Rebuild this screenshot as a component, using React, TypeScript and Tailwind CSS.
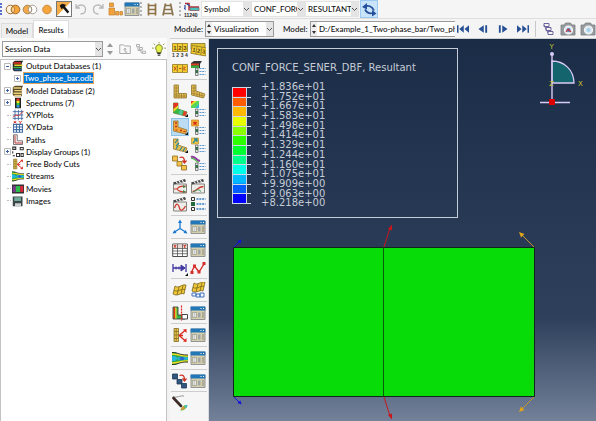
import React from "react";

type IconProps = { children: React.ReactNode; className?: string };

function Icon({ children, className = "h-4 w-4" }: IconProps) {
  return (
    <svg viewBox="0 0 16 16" className={`block shrink-0 ${className}`} fill="none" aria-hidden="true">
      {children}
    </svg>
  );
}

/* ---------- toolbox drawings ---------- */

const bentL = "M1.500 2h4.500v6l9 3-1.500 4-12-3z";
const straightL = "M2 2h4.500v8.500h8v4.500H2z";

function Numbers({ tilted = false }: { tilted?: boolean }) {
  return (
    <Icon>
      {tilted && <path d="M1 1.500h14v6H1z" fill="#e0c22c" stroke="#77661e" strokeWidth=".7" />}
      <g transform={tilted ? "rotate(10 8 8) translate(1 3)" : "translate(0 0)"}>
        <path d="M.5 1.500h15v8H.5z" fill="#f5cf2f" stroke="#8f7a28" strokeWidth=".8" />
        <path d="M5.500 1.500v8M10.500 1.500v8" stroke="#8f7a28" strokeWidth=".8" />
        <g fill="#59441a" fontFamily="Liberation Sans, sans-serif" fontSize="6" fontWeight="700">
          <text x="1.300" y="7.600">1</text>
          <text x="6.300" y="7.600">2</text>
          <text x="11.300" y="7.600">3</text>
        </g>
      </g>
      {!tilted && (
        <g fill="#333" fontFamily="Liberation Sans, sans-serif" fontSize="5" fontWeight="700">
          <text x="0" y="15">1</text>
          <text x="4.300" y="15">2</text>
          <text x="8.700" y="15">3</text>
          <text x="13" y="15">4</text>
        </g>
      )}
    </Icon>
  );
}

function CrossedStrip() {
  return (
    <Icon>
      <path d="M.5 4.500h15v8H.5z" fill="#f5cf2f" stroke="#8f7a28" strokeWidth=".8" />
      <path d="M5.500 4.500v8M10.500 4.500v8" stroke="#8f7a28" strokeWidth=".8" />
      <path d="M2 6.500l2.500 4M4.500 6.500l-2.500 4M7 8.500h2.500M12 6.500v4M14 6.500l-2 2 2 2" stroke="#c8541e" />
    </Icon>
  );
}

function OptionList({ kind }: { kind: "solid" | "contour" | "red" | "vector" | "curve" | "plain" }) {
  return (
    <Icon>
      {kind === "solid" && (
        <>
          <path d="M1 3l3-2h8l-2 3v4H1z" fill="#333" />
          <path d="M1 3.500h8v2H1z" fill="#e23a22" />
          <path d="M1 5.500h8v2.500H1z" fill="#38a838" />
        </>
      )}
      {kind === "contour" && (
        <>
          <path d="M1 0h8v7H1z" fill="#58d658" />
          <path d="M1 0h6L1 5z" fill="#f0e32e" />
          <path d="M1 0h3L1 3z" fill="#ef4423" />
          <path d="M9 3v4H5z" fill="#31b8e0" />
        </>
      )}
      {kind === "red" && (
        <>
          <path d="M1.500 1h7v6h-7z" fill="#f2ad36" stroke="#c98a1c" strokeWidth=".7" />
          <path d="M3.500 3l3 2.500M6.500 3l-3 2.500" stroke="#d32616" strokeWidth="1.500" />
        </>
      )}
      {kind === "vector" && (
        <>
          <path d="M1.500 1h7v6h-7z" fill="#f3c845" stroke="#b99429" strokeWidth=".7" />
          <path d="M3 6l3.500-4M4 2h3v3" stroke="#26889c" strokeWidth="1.300" />
        </>
      )}
      {kind === "curve" && (
        <>
          <path d="M1 2c4-2 4 3 9 4" stroke="#8c3b9c" strokeWidth="2" />
          <path d="M1 3.500c4-1 4 3 8 4" stroke="#52b848" strokeWidth="1.200" />
        </>
      )}
      {kind === "plain" ? (
        <>
          <path d="M1.500 1.500h3v3h-3zM1.500 11.500h3v3h-3z" stroke="#333" />
          <path d="M1 6h4v4H1z" fill="#246b3c" />
          <path d="M6.500 3h9M6.500 8h9M6.500 13h9" stroke="#397fc4" strokeWidth="1.400" strokeDasharray="2 .8" />
        </>
      ) : (
        <>
          <path d="M5.500 8h2.500v7.500H5.500z" fill="#e6e6e6" stroke="#666" strokeWidth=".8" />
          <path d="M5.500 10h2.500v3H5.500z" fill="#386f4b" />
          <path d="M9.500 8.500h6M9.500 11.500h6M9.500 14.500h6" stroke="#5c96ce" strokeWidth="1.100" strokeDasharray="2 .7" />
        </>
      )}
    </Icon>
  );
}

function MeshL({ bent = false, mode = "plain" }: { bent?: boolean; mode?: "plain" | "contour" | "symbol" | "material" }) {
  return (
    <Icon>
      <path
        d={bent ? bentL : straightL}
        fill={mode === "contour" ? "#35b943" : mode === "symbol" ? "#f3a53a" : "#e9c252"}
        stroke={mode === "contour" ? "#5d7d3c" : "#907632"}
        strokeWidth=".8"
      />
      {mode === "contour" && (
        <>
          <path d="M1.500 2h4.500v2.500L1.500 8z" fill="#ea3320" />
          <path d="M1.500 8L6 4.500V7L1.500 11z" fill="#f3d326" />
          <path d="M8 8.700l3 1-1.500 4.300-3-.8z" fill="#52c8a0" />
          <path d="M12 10l3 1-1.500 4-3-.8z" fill="#e4402a" />
        </>
      )}
      {mode === "plain" && !bent && (
        <path d="M2 5h4.500M2 8h4.500M2 11h4.500M2 13h12.500M4.200 2v13M7 10.500V15M9.500 10.500V15M12 10.500V15" stroke="#907632" strokeWidth=".7" />
      )}
      {mode === "plain" && bent && (
        <path d="M1.500 5H6M1.500 8H6M1.500 10l12.500 3M4 2v10.500M7 8.500v5M9.500 9v5M12 10v4.500" stroke="#907632" strokeWidth=".7" />
      )}
      {mode === "symbol" && (
        <path d="M3 4h2M4 3v2M3 7.500h2M4 6.500v2M3.500 11h2M8 11.500h2M9 10.500v2M11.500 12.500h2" stroke="#c13a18" strokeWidth="1.100" />
      )}
      {mode === "material" && (
        <path d="M3 6l3-4M4 9l3-3M4 12l2-3M8 13l2-3M11 14l2-3" stroke="#28869a" strokeWidth="1.200" />
      )}
      {mode !== "plain" && <path d="M16 13v3h-3z" fill="#111" />}
    </Icon>
  );
}

function Superimpose({ dark = false }: { dark?: boolean }) {
  const fill = dark ? "#31577f" : "#f5c24b";
  const stroke = dark ? "#203a58" : "#8f6c1c";
  return (
    <Icon>
      <path d="M.5 1h5v5h-5z" fill={fill} stroke={stroke} strokeWidth=".8" />
      <path d="M5 6.500h5v4.500H5zM9.500 10.500h5V15h-5z" fill={fill} stroke={stroke} strokeWidth=".8" />
      <path d="M7.500 2.500c4-1.500 5 1 5 4.500M10.500 5.500l2 2.500 2-2.500" stroke="#cf3322" strokeWidth="1.300" />
    </Icon>
  );
}

function Clapper({ kind }: { kind: "loop" | "peak" | "wave" }) {
  return (
    <Icon>
      <path d="M1.500 6h13v9h-13z" fill="#ecece8" stroke="#84867f" />
      <path d="M1 4.500l12-3.500 1 2.500L2 6.500z" fill="#444" />
      <path d="M4 3.500l1.500 2M7 2.800l1.500 2M10 2l1.500 2" stroke="#fff" strokeWidth="1.100" />
      {kind === "loop" && (
        <>
          <path d="M2 11h3c2-3 5-3 9-3M5 11c2 3 5 3 9 3" stroke="#cf3a30" strokeWidth="1.200" />
          <path d="M11 7v3l3-1zM11 12v3l3-1z" fill="#328546" />
        </>
      )}
      {kind === "peak" && (
        <>
          <path d="M2.500 13.500c4 0 5-5 11-5" stroke="#cf3a30" strokeWidth="1.300" />
          <path d="M3 13.500c4 0 4-4 8 0" stroke="#328546" />
        </>
      )}
      {kind === "wave" && <path d="M2.500 12c2-6 4-4 5 0s4 2 6-2" stroke="#cf3a30" strokeWidth="1.300" />}
    </Icon>
  );
}

function DialogIcon() {
  return (
    <Icon>
      <path d="M1 2h14v12.500H1z" fill="#d6cfad" stroke="#7d8185" strokeWidth=".8" />
      <path d="M.6 1.500h14.800v4H.6z" fill="#2477b7" />
      <path d="M10.500 3.500h1M13 3.500h1" stroke="#fff" />
      <path d="M2.500 7.500h4v5h-4z" fill="#fff" stroke="#858877" strokeWidth=".6" />
      <path d="M8 7.500h2.500v5H8z" fill="#9fa6a6" />
      <path d="M12 8h2M12 10h2M12 12h2M3.500 9h2M3.500 11h2" stroke="#777" strokeWidth=".8" />
    </Icon>
  );
}

function Axes() {
  return (
    <Icon>
      <path d="M8 2v7.500L2.500 13M8 9.500l5.500 3.500" stroke="#1878d2" strokeWidth="1.300" />
      <path d="M8 .5L6 4h4zM.5 14.500l2-3.500 2 3zM15.500 14.500l-4-.5 2-3z" fill="#1878d2" />
    </Icon>
  );
}

function DataTable() {
  return (
    <Icon>
      <path d="M.7 2h14.600v12.500H.7z" fill="#fff" stroke="#4d4d4d" />
      <path d="M1 2.500h14V6H1z" fill="#ead9d5" />
      <path d="M.7 6.500h14.600M.7 9h14.600M.7 11.700h14.600M5.500 2v12.500M10.500 2v12.500" stroke="#555" strokeWidth=".8" />
      <path d="M2 3l2 2.500M4 3L2 5.500M11.500 3l1.200 1.300L14 3M12.700 4v2" stroke="#c93a2b" strokeWidth="1.100" />
    </Icon>
  );
}

function DimensionArrow() {
  return (
    <Icon>
      <path d="M1 4v8M14 4v8M1 8h12" stroke="#4038a0" strokeWidth="1.300" />
      <path d="M9 5l4 3-4 3zM4 6.500v3M7 6.500v3" fill="#4038a0" stroke="#4038a0" />
      <path d="M16 13v3h-3z" fill="#111" />
    </Icon>
  );
}

function ZigZag() {
  return (
    <Icon>
      <path d="M1.500 12L4.500 6l4.500 6 5-8" stroke="#d62e2a" strokeWidth="1.400" />
      <path d="M.5 11h3v3h-3zM3 4.500h3v3H3zM7.500 10.500h3v3h-3zM12.500 2h3v3h-3z" fill="#d62e2a" />
    </Icon>
  );
}

function WavySheet({ linked = false }: { linked?: boolean }) {
  return (
    <Icon>
      <g transform={linked ? "translate(1 -3)" : undefined}>
        <path d="M3 4c4 3 6-2 11-1l-2 9c-3-2-6 3-11 0z" fill="#f0c837" stroke="#79641c" strokeWidth=".8" />
        <path d="M2 8.500c4 2 7-2 11-1M7 5l-2 8M11 3.500l-2 8.500" stroke="#79641c" strokeWidth=".8" />
      </g>
      {linked && <path d="M2 11h4v3H2zM6 12h4v3H6zM10 11h4v4h-4z" fill="#edf3ff" stroke="#4775bd" />}
    </Icon>
  );
}

function ViewCut() {
  return (
    <Icon>
      <path d="M1 2h5v8h7v4H1z" fill="#3ab64d" stroke="#333" strokeWidth=".8" />
      <path d="M1.500 2.500h1.700v11H1.500z" fill="#e5321e" />
      <path d="M3.200 2.500h1.300v11H3.200z" fill="#f1d522" />
      <path d="M10 9.500h5.500V14H10z" fill="#fff" stroke="#333" strokeWidth=".9" />
      <path d="M9.500.5V16" stroke="#e4231a" strokeWidth="1.200" strokeDasharray="2 1" />
    </Icon>
  );
}

function FreeBody({ className }: { className?: string }) {
  return (
    <Icon className={className}>
      <path d="M2 1.500h4.500v13H2z" fill="#edc64b" stroke="#826d27" strokeWidth=".8" />
      <path d="M2 4.500h4.500M2 8h4.500M2 11.500h4.500M4.200 1.500v13" stroke="#826d27" strokeWidth=".8" />
      <path d="M7 8.500l6-5M7 8.500h4M7 8.500l6 5" stroke="#dc2b22" strokeWidth="1.300" />
      <path d="M14.500 2v4l-3.500-3.500zM14.500 15v-4L11 14.500z" fill="#dc2b22" />
    </Icon>
  );
}

function Streams({ className }: { className?: string }) {
  return (
    <Icon className={className}>
      <path d="M0 2c6 0 5 2 9 3s4 0 7 0v7c-3 0-4-1-7 0s-3 3-9 3z" fill="#2da747" />
      <path d="M0 4c6 0 7 2 16 2M0 13c6 0 7-2 16-2" stroke="#f3e225" strokeWidth="1.500" />
      <path d="M0 6h3l3 2.500L3 11H0z" fill="#24b6dd" />
      <path d="M5 8.500C7 6 9 6.500 16 7.500v2C9 10.500 7 11 5 8.500z" fill="#24b6dd" />
      <ellipse cx="10" cy="8.500" rx="2.500" ry="1.500" fill="#2a61c8" />
      <path d="M0 2.500c7 0 6 2.500 16 2.500M0 14.500c7 0 6-2.500 16-2.500" stroke="#222" strokeWidth=".9" />
    </Icon>
  );
}

function Brush() {
  return (
    <Icon className="h-[18px] w-4">
      <path d="M1 2c4 1 8-2 11-1" stroke="#999" />
      <path d="M1.500 3l7.500 8" stroke="#3c2b27" strokeWidth="2.600" strokeLinecap="round" />
      <path d="M8.500 15.500c1-3.500 3-5.500 7-5.500-1 3.500-3 5.500-7 5.500z" fill="#60c34f" />
      <path d="M8.500 15.500c1-2.500 2-3.500 3-4.500l1.500 2.500z" fill="#e98d35" />
      <path d="M12.500 11l3-1-1 3z" fill="#40b5e4" />
    </Icon>
  );
}

type Tool = { label: string; icon: React.ReactNode; active?: boolean };
const options = (label: string): Tool => ({ label, icon: <DialogIcon /> });

const toolGroups: { tight?: boolean; tools: Tool[] }[] = [
  {
    tools: [
      { label: "Number frames", icon: <Numbers /> },
      { label: "Overlay frames", icon: <Numbers tilted /> },
      { label: "Link frames", icon: <CrossedStrip /> },
      { label: "Common options", icon: <OptionList kind="solid" /> },
    ],
  },
  {
    tools: [
      { label: "Plot undeformed shape", icon: <MeshL /> },
      { label: "Plot deformed shape", icon: <MeshL bent /> },
      { label: "Plot contours", icon: <MeshL bent mode="contour" /> },
      { label: "Contour options", icon: <OptionList kind="contour" /> },
      { label: "Plot symbols", icon: <MeshL bent mode="symbol" />, active: true },
      { label: "Symbol options", icon: <OptionList kind="red" /> },
      { label: "Plot material orientations", icon: <MeshL bent mode="material" /> },
      { label: "Material orientation options", icon: <OptionList kind="vector" /> },
      { label: "Allow multiple plot states", icon: <Superimpose /> },
      { label: "Superimpose options", icon: <OptionList kind="curve" /> },
    ],
  },
  {
    tools: [
      { label: "Animate scale factor", icon: <Clapper kind="loop" /> },
      { label: "Animate time history", icon: <Clapper kind="peak" /> },
      { label: "Animate harmonic", icon: <Clapper kind="wave" /> },
      { label: "Animation options", icon: <OptionList kind="plain" /> },
    ],
  },
  { tools: [{ label: "Create coordinate system", icon: <Axes /> }, options("Coordinate system manager")] },
  {
    tight: true,
    tools: [
      { label: "Create XY data", icon: <DataTable /> },
      options("XY data manager"),
      { label: "XY axis options", icon: <DimensionArrow /> },
      { label: "XY curve options", icon: <ZigZag /> },
    ],
  },
  {
    tools: [
      { label: "Create field output", icon: <WavySheet /> },
      { label: "Create field output from frames", icon: <WavySheet linked /> },
    ],
  },
  { tight: true, tools: [{ label: "Activate view cut", icon: <ViewCut /> }, options("View cut manager")] },
  { tools: [{ label: "Show free body", icon: <FreeBody /> }, options("Free body manager")] },
  { tools: [{ label: "Create stream", icon: <Streams /> }, options("Stream manager")] },
  { tight: true, tools: [{ label: "Create display group", icon: <Superimpose dark /> }, options("Display group manager")] },
  { tools: [{ label: "Color code", icon: <Brush /> }] },
];

function Toolbox() {
  return (
    <div role="toolbar" aria-label="Visualization tools" className="w-[39px] shrink-0 border-r border-[#dcdcdc] bg-[#f6f6f6] px-px">
      {toolGroups.map((group, i) => (
        <div
          key={i}
          className={`grid grid-cols-2 border-b border-[#cdcdcd] pt-0.5 last:border-0 ${group.tight ? "pb-px" : "pb-0.5"}`}
        >
          {group.tools.map((tool) => (
            <button
              key={tool.label}
              type="button"
              aria-label={tool.label}
              className={`flex h-[18px] items-center justify-center ${tool.active ? "bg-[#bcdcf4] outline outline-1 -outline-offset-1 outline-[#8cc1e8]" : ""}`}
            >
              {tool.icon}
            </button>
          ))}
        </div>
      ))}
    </div>
  );
}

/* ---------- shared controls ---------- */

type ComboProps = { label: string; value: string; width: string; spinner?: boolean; arrow?: boolean; framed?: boolean };

function Combo({ label, value, width, spinner = false, arrow = true, framed = false }: ComboProps) {
  return (
    <div className={`flex h-4 min-w-0 items-stretch border bg-white ${framed ? "border-[#9a9a9a]" : "border-[#e3e3e3]"} ${width}`}>
      {spinner && (
        <svg viewBox="0 0 6 14" className="h-[14px] w-1.5 shrink-0 bg-[#efefef]" aria-hidden="true">
          <path d="M1 5l2-3 2 3zM1 9l2 3 2-3z" fill="#333" />
        </svg>
      )}
      <select aria-label={label} defaultValue={value} className="min-w-0 flex-1 appearance-none bg-transparent pl-0.5 leading-[14px] outline-none">
        <option>{value}</option>
      </select>
      {arrow && (
        <svg viewBox="0 0 7 14" className="h-[14px] w-[7px] shrink-0 bg-[#e4e4e4]" fill="none" aria-hidden="true">
          <path d="M1 6l2.500 2.500L6 6" stroke="#555" />
        </svg>
      )}
    </div>
  );
}

function Grip() {
  return <span className="h-3.5 border-l-2 border-dotted border-[#b4b4b4]" />;
}

/* ---------- top toolbar ---------- */

const displayTools: Tool[] = [
  {
    label: "Replace selected",
    icon: (
      <Icon>
        <circle cx="5.500" cy="8.500" r="4.300" fill="#fff3df" stroke="#a06b2b" />
        <circle cx="10.500" cy="8.500" r="4.300" fill="#f5a53c" stroke="#a06b2b" />
        <path d="M8 5c2 2 2 5 0 7-2-2-2-5 0-7z" fill="#ffd293" stroke="#a06b2b" strokeWidth=".8" />
      </Icon>
    ),
  },
  {
    label: "Remove selected",
    icon: (
      <Icon>
        <circle cx="10.500" cy="8.500" r="4.300" fill="#fff" stroke="#aaa196" />
        <circle cx="5.500" cy="8.500" r="4.300" fill="#f3a94c" stroke="#a08658" />
        <path d="M8 5c2 2 2 5 0 7-2-2-2-5 0-7z" fill="#fff" stroke="#8d8378" strokeWidth=".8" />
      </Icon>
    ),
  },
  { label: "Replace all", icon: <Icon><circle cx="8" cy="8.500" r="4.300" fill="#f5a53c" stroke="#c98a3c" /></Icon> },
  {
    label: "Select entities",
    active: true,
    icon: (
      <Icon className="h-[14px] w-[14px]">
        <path d="M0 0h16L0 16z" fill="#f5ab48" />
        <path d="M16 0v16H0z" fill="#fff" />
        <path d="M3 4l3-2 4 1-1 2 5 6-2 2-5-6-2 1z" fill="#151515" />
      </Icon>
    ),
  },
  {
    label: "Undo",
    icon: <Icon><path d="M3 3v4h4M3.500 6.500c3-4 9-3 9 2 0 3-2 4.500-5 4.500" stroke="#b8b8b8" strokeWidth="1.300" /></Icon>,
  },
  {
    label: "Redo",
    icon: <Icon><path d="M13 3v4H9M12.500 6.500c-3-4-9-3-9 2 0 3 2 4.500 5 4.500" stroke="#b8b8b8" strokeWidth="1.300" /></Icon>,
  },
  {
    label: "Create display group",
    icon: (
      <Icon>
        <path d="M2.500 2h4v3.500h-4zM2 7h5.500v7H2z" fill="#f4a13b" stroke="#c48a3a" strokeWidth=".8" />
        <path d="M8.500 10.500H12V14H8.500zM13 10.500h2.500V14H13z" fill="#f4a13b" stroke="#c48a3a" strokeWidth=".8" />
      </Icon>
    ),
  },
  { label: "Display group manager", icon: <DialogIcon /> },
];

const ladder = (
  <Icon><path d="M4.500 2.500v12M11.500 2.500v12M4.500 4.500h7M4.500 8.500h7M4.500 12.500h7" stroke="#8f7346" strokeWidth="1.700" /></Icon>
);
const perspectiveLadder = (
  <Icon><path d="M5.500 2.500L3 14.500M10.500 2.500L13 14.500M5.500 4.500h5.500M4.500 8.500h7M3.500 12.500h9" stroke="#8a7450" strokeWidth="1.700" /></Icon>
);

function TopToolbar() {
  return (
    <div role="toolbar" aria-label="Display" className="flex h-[19px] items-center border-b border-[#dedede] bg-[#f5f5f5]">
      <span className="h-3 border-l-2 border-dotted border-[#5a70d0]" />
      <div className="ml-[3px] flex gap-px">
        {displayTools.map((t) => (
          <button
            key={t.label}
            type="button"
            aria-label={t.label}
            className={`flex h-4 w-4 items-center justify-center ${t.active ? "border border-[#777]" : ""}`}
          >
            {t.icon}
          </button>
        ))}
      </div>
      <div className="flex items-center">
        <Grip />
        <button type="button" aria-label="Parallel view" className="ml-0.5">{ladder}</button>
        <button type="button" aria-label="Perspective view">{perspectiveLadder}</button>
        <span className="ml-[3px] flex"><Grip /></span>
      </div>
      <Icon className="ml-[3px] mr-px h-4 w-4">
        <path d="M1 2.500h4v7M5 6h10" stroke="#b4343a" strokeWidth="1.500" />
        <path d="M6 6.500h9v3H6z" fill="#48c0ba" stroke="#8c4a50" strokeWidth=".7" />
        <path d="M1 4v4l-1-1M3 3l3 2" stroke="#2a4aa0" strokeWidth="1.200" />
        <g fill="#222" fontFamily="Liberation Sans, sans-serif" fontSize="5" fontWeight="700">
          <text x="0" y="15.500">11240</text>
        </g>
      </Icon>
      <div className="flex">
        <Combo label="Plot type" value="Symbol" width="w-[50px]" />
        <Combo label="Output variable" value="CONF_FORCE" width="w-[54px]" />
        <Combo label="Refinement" value="RESULTANT" width="w-[54px]" />
      </div>
      <button type="button" aria-label="Synchronize" className="ml-px border border-[#9dcaf0] bg-[#c9e3f8]">
        <Icon>
          <path d="M4 5.500c3-1.500 7-.5 9 4M12 12c-3 1-6 0-8-3.500" stroke="#244f9c" strokeWidth="1.800" />
          <path d="M1 6l5-4v6.500zM15.500 12.500L11 9v6.500z" fill="#244f9c" />
        </Icon>
      </button>
    </div>
  );
}

/* ---------- module bar ---------- */

const playback: Tool[] = [
  { label: "First frame", icon: <Icon className="h-3 w-3"><path d="M0 3h2v10H0zM9 3v10L3 8zM16 3v10L10 8z" fill="#264f94" /></Icon> },
  { label: "Previous frame", icon: <Icon className="h-3 w-3"><path d="M9 3v10L2 8zM11 3h2.500v10H11z" fill="#264f94" /></Icon> },
  { label: "Next frame", icon: <Icon className="h-3 w-3"><path d="M7 3v10l7-5zM2.500 3H5v10H2.500z" fill="#264f94" /></Icon> },
  { label: "Last frame", icon: <Icon className="h-3 w-3"><path d="M14 3h2v10h-2zM7 3v10l6-5zM0 3v10l6-5z" fill="#264f94" /></Icon> },
];

function Camera({ marked = false }: { marked?: boolean }) {
  return (
    <Icon>
      <path d="M1 4h3l1.500-2h5L12 4h3v10H1z" fill="#969b9f" stroke="#7c7f82" strokeWidth=".8" />
      <circle cx="8.500" cy="9" r="4" fill="#d9e9f5" stroke="#f4f4f4" strokeWidth="1.200" />
      <circle cx="8.500" cy="9" r="2" fill={marked ? "#4f78bd" : "#a8cfe8"} />
      {marked && <path d="M8 8l3 3M6 11l2-3" stroke="#c73838" strokeWidth="1.200" />}
    </Icon>
  );
}

function ModuleBar() {
  return (
    <div className="flex h-5 items-center overflow-hidden border-b border-[#d0d0d0] bg-[#f4f4f4]">
      <span className="w-[35px] shrink-0 pl-1">Module:</span>
      <Combo label="Module" value="Visualization" width="w-[69px] shrink-0" spinner framed />
      <span className="ml-[9px] w-[27px] shrink-0">Model:</span>
      <Combo label="Model" value="D:/Example_1_Two-phase_bar/Two_phase_bar.odb" width="flex-1 border-r-0" spinner arrow={false} framed />
      <div className="flex shrink-0 gap-2 pl-0.5">
        {playback.map((t) => (
          <button key={t.label} type="button" aria-label={t.label}>{t.icon}</button>
        ))}
      </div>
      <span className="ml-1.5 h-4 shrink-0 border-l border-[#c8c8c8]" />
      <div className="flex shrink-0 gap-1 pl-1">
        <button type="button" aria-label="Cascade viewports">
          <Icon><path d="M4 2.500h5v3H4zM6 6.500h5v3H6zM8 10.500h5v3H8zM4 4l4 8" stroke="#6b639c" /></Icon>
        </button>
        <button type="button" aria-label="Snapshot with view"><Camera marked /></button>
        <button type="button" aria-label="Snapshot"><Camera /></button>
      </div>
    </div>
  );
}

/* ---------- results tree ---------- */

const rainbowStack = (
  <Icon className="h-3 w-3">
    <path d="M1 3l3-2h11l-2 3v11H3L1 13z" fill="#222" />
    <path d="M2 4h10" stroke="#ee3422" strokeWidth="2" />
    <path d="M3 7h11" stroke="#f3cf29" strokeWidth="2" />
    <path d="M2 10h11" stroke="#43b64d" strokeWidth="2" />
    <path d="M3 13h10" stroke="#3070c8" strokeWidth="1.500" />
  </Icon>
);

const treeItems: { label: string; icon: React.ReactNode; expander?: string; child?: boolean }[] = [
  { label: "Output Databases (1)", icon: rainbowStack, expander: "−" },
  { label: "Two_phase_bar.odb", icon: null, expander: "+", child: true },
  {
    label: "Model Database (2)",
    expander: "+",
    icon: (
      <Icon className="h-3 w-3">
        <path d="M1 3l3-2h11l-2 3v11H3L1 13z" fill="#5a4b28" />
        <path d="M2 4h10M3 7.500h11M2 11h11M3 14h9" stroke="#ead17a" strokeWidth="1.800" />
      </Icon>
    ),
  },
  {
    label: "Spectrums (7)",
    expander: "+",
    icon: (
      <Icon className="h-3 w-3">
        <path d="M4 1h8v14H4z" fill="#222" />
        <path d="M6 2h4v3H6z" fill="#f0301c" />
        <path d="M6 5h4v3H6z" fill="#f4e21f" />
        <path d="M6 8h4v3H6z" fill="#39c649" />
        <path d="M6 11h4v3H6z" fill="#2aa1dc" />
      </Icon>
    ),
  },
  {
    label: "XYPlots",
    icon: (
      <Icon className="h-3 w-3">
        <path d="M1 3.500h14M1 8h14M1 12.500h14M4 1v14M8.500 1v14M13 1v14" stroke="#416da5" strokeWidth="1.200" />
        <path d="M1 11l4-3 4 1 6-6" stroke="#d62f2a" strokeWidth="1.200" />
      </Icon>
    ),
  },
  {
    label: "XYData",
    icon: (
      <Icon className="h-3 w-3">
        <path d="M2 4.500h12V15H2zM2 8h12M2 11.500h12M6 4.500V15M10 4.500V15" stroke="#416da5" strokeWidth="1.400" />
        <path d="M2 0l4 3M6 0L2 3M9 0l2 2 2-2M11 2v2" stroke="#dc322b" strokeWidth="1.300" />
      </Icon>
    ),
  },
  {
    label: "Paths",
    icon: (
      <Icon className="h-3 w-3">
        <path d="M2 1h5v8h7v5H2z" fill="#f6eeee" stroke="#5a5152" />
        <path d="M4 2v10h10" stroke="#bc3a3b" strokeWidth="1.300" />
      </Icon>
    ),
  },
  {
    label: "Display Groups (1)",
    expander: "+",
    icon: (
      <Icon className="h-3 w-3"><path d="M1 1.500h4v3H1zM11 2h4v3h-4zM6 10h4v4H6zM12 10h3v4h-3zM1 7v3M1 13h3" stroke="#333" strokeWidth="1.400" /></Icon>
    ),
  },
  { label: "Free Body Cuts", icon: <FreeBody className="h-3 w-3" /> },
  { label: "Streams", icon: <Streams className="h-3 w-3" /> },
  {
    label: "Movies",
    icon: (
      <Icon className="h-3 w-3">
        <path d="M0 2h16v12H0z" fill="#333" />
        <path d="M1 4h4v8H1z" fill="#7e3791" />
        <path d="M5 4h6v8H5z" fill="#2bbd4a" />
        <path d="M11 4h4v8h-4z" fill="#d72938" />
      </Icon>
    ),
  },
  {
    label: "Images",
    icon: (
      <Icon className="h-3 w-3">
        <path d="M1 2h13v13H1z" fill="#3b4548" />
        <path d="M3 3h9v5H3z" fill="#71a99b" />
        <path d="M4 11h8v4H4z" fill="#cbd2d0" />
      </Icon>
    ),
  },
];

function SidePanel() {
  return (
    <aside className="flex w-[167px] shrink-0 flex-col bg-[#f2f2f2]">
      <div role="tablist" className="flex h-[19px] items-end pl-px">
        <button role="tab" aria-selected="false" type="button" className="h-[15px] w-8 border border-b-0 border-[#dcdcdc] bg-[#eeeeee]">Model</button>
        <button role="tab" aria-selected="true" type="button" className="h-[18px] w-9 border border-b-0 border-[#dcdcdc] bg-white">Results</button>
      </div>
      <div className="flex flex-1 flex-col bg-[#fafafa] pt-0.5">
        <div className="flex h-[17px] items-center pl-0.5">
          <Combo label="Data source" value="Session Data" width="w-[101px]" framed />
          <div className="flex flex-1 items-center justify-between pl-[3px] pr-[1px]">
            <svg viewBox="0 0 8 14" className="h-3.5 w-2" aria-hidden="true"><path d="M1 5l3-4 3 4zM1 9l3 4 3-4z" fill="#999" /></svg>
            <button type="button" aria-label="Up one level">
              <Icon className="h-3 w-3"><path d="M1 4V2.500h5L7.500 4H15v10H1zM8 12V7M6 9l2-2 2 2M8 12h3" stroke="#a0a0a0" strokeWidth="1.200" /></Icon>
            </button>
            <button type="button" aria-label="Filter">
              <Icon className="h-3 w-3"><path d="M2 2h4v3H2zM6 6h4v3H6zM10 11h4v3h-4zM4 5v5h4M8 9v4h2" stroke="#a8a8a8" strokeWidth="1.200" /></Icon>
            </button>
            <button type="button" aria-label="Tips">
              <Icon className="h-3.5 w-3.5">
                <path d="M8 3a4 4 0 0 0-2.500 7v2h5v-2A4 4 0 0 0 8 3z" fill="#e6f04a" stroke="#6d7624" />
                <path d="M6 13h4M6.500 15h3" stroke="#333" strokeWidth="1.400" />
                <path d="M8 0v1.500M2 2l1.500 1.500M14 2l-1.500 1.500M0 7h2M14 7h2" stroke="#8c8f2a" />
              </Icon>
            </button>
          </div>
        </div>
        <div className="mt-0.5 flex-1 border border-b-0 border-[#c3c3c3] bg-white">
          <ul role="tree" className="grid h-[147px] auto-rows-fr">
            {treeItems.map((item) => (
              <li
                key={item.label}
                role="treeitem"
                aria-selected={item.child ?? false}
                className={`flex items-center ${item.child ? "pl-[13px]" : "pl-[3px]"}`}
              >
                {item.expander ? (
                  <svg viewBox="0 0 7 7" className="h-[7px] w-[7px] shrink-0" fill="none" aria-hidden="true">
                    <path d="M.5.5h6v6h-6z" fill="#fff" stroke="#b9b9b9" />
                    <path d={item.expander === "+" ? "M2 3.500h3M3.500 2v3" : "M2 3.500h3"} stroke="#3c5fa8" />
                  </svg>
                ) : (
                  <span className="ml-[3px] w-1 border-t border-dotted border-[#c0c0c0]" />
                )}
                {item.child ? (
                  <span className="ml-0.5 border border-[#e4a35c] bg-[#0078d7] leading-[10px] text-white">{item.label}</span>
                ) : (
                  <>
                    <span className="ml-px">{item.icon}</span>
                    <span className="ml-0.5">{item.label}</span>
                  </>
                )}
              </li>
            ))}
          </ul>
        </div>
      </div>
    </aside>
  );
}

/* ---------- viewport ---------- */

const legendValues = [
  "+1.836e+01", "+1.752e+01", "+1.667e+01", "+1.583e+01", "+1.498e+01", "+1.414e+01", "+1.329e+01",
  "+1.244e+01", "+1.160e+01", "+1.075e+01", "+9.909e+00", "+9.063e+00", "+8.218e+00",
];
const legendColors = [
  "#ff0000", "#ff5d00", "#ffb900", "#e8ff00", "#8bff00", "#2eff00",
  "#00ff2e", "#00ff8b", "#00ffe8", "#00b9ff", "#005dff", "#0000ff",
];

function Legend() {
  return (
    <div className="ml-2 mt-[9px] h-[170px] w-[241px] border border-[#c6ccd6] pl-3.5 pt-3 font-['DejaVu_Sans',sans-serif] text-[10px] text-[#c6ccd6]">
      <div className="whitespace-nowrap leading-[14px]">CONF_FORCE_SENER_DBF, Resultant</div>
      <div className="mt-[7px] flex">
        <svg viewBox="0 0 20 126" className="h-[126px] w-5 shrink-0" aria-hidden="true">
          {legendColors.map((c, i) => (
            <rect key={c} x="1" y={5 + (i * 116) / 12} width="14" height="10" fill={c} />
          ))}
          <path d="M.5 5v116M14.500 5v116" stroke="#cfd6e6" />
          {legendValues.map((v, i) => (
            <path key={v} d={`M0 ${Math.round(5 + (i * 116) / 12) + 0.5}h19`} stroke="#cfd6e6" />
          ))}
        </svg>
        <ol className="ml-[9px] grid h-[126px] auto-rows-fr leading-[10px]">
          {legendValues.map((v) => <li key={v}>{v}</li>)}
        </ol>
      </div>
    </div>
  );
}

function Triad() {
  return (
    <svg viewBox="0 0 50 66" className="absolute right-[9px] top-0 h-[66px] w-[50px]" fill="none" aria-label="View triad">
      <path d="M15 22c12 0 22 9 22 22H15z" fill="#14646e" stroke="#d9c9f5" strokeWidth="1.300" />
      <path d="M15 15v48M3 63.500h30" stroke="#d9c9f5" strokeWidth="1.400" />
      <circle cx="15" cy="15" r="2" fill="#d9c9f5" />
      <path d="M12 60h6v6h-6z" fill="#dc0000" />
      <g fill="#c9c32a" fontFamily="DejaVu Sans, sans-serif" fontSize="7">
        <text x="12.500" y="9.500">Y</text>
        <text x="41" y="46.500">X</text>
        <text x="12" y="46.500">Z</text>
      </g>
    </svg>
  );
}

function Model() {
  return (
    <svg viewBox="0 0 387 203" className="block h-auto w-full" fill="none" aria-label="Two phase bar symbol plot">
      <path d="M24.500 29.500h301v149h-301z" fill="#08dc08" stroke="#10241c" />
      <path d="M174.500 29.500v149" stroke="#0b5a12" />
      <g stroke="#c8161c" fill="#c8161c">
        <path d="M175 29l6-19M175 179l6 19" />
        <path d="M183 6.500v6l-4-1.500zM183 201.500v-6l-4 1.500z" stroke="none" />
      </g>
      <g stroke="#1212e0" fill="#1212e0">
        <path d="M25 29l6-6M25 179l6 6" />
        <path d="M32.500 21.500l-1 4-3-2.500zM32.500 186.500l-1-4-3 2.500z" stroke="none" />
      </g>
      <g stroke="#c0932c" fill="#e0a31a">
        <path d="M325 29l-13-13M325 179l-13 13" />
        <path d="M310 14l5.500 2-3.500 3.500zM310 194l5.500-2-3.500-3.500z" stroke="none" />
      </g>
    </svg>
  );
}

export default function App() {
  return (
    <div className="flex min-h-screen flex-col bg-[#f2f2f2] font-['Lato','Open_Sans',sans-serif] text-[8px] font-medium leading-3 text-[#111]">
      <TopToolbar />
      <div className="flex flex-1">
        <SidePanel />
        <div className="ml-[3px] flex min-w-0 flex-1 flex-col">
          <ModuleBar />
          <div className="flex flex-1">
            <Toolbox />
            <main className="relative min-w-0 flex-1 bg-linear-to-b from-[#1b2c47] via-[#2e405b] via-73% to-[#738199]">
              <Legend />
              <Triad />
              <Model />
            </main>
          </div>
        </div>
      </div>
    </div>
  );
}
